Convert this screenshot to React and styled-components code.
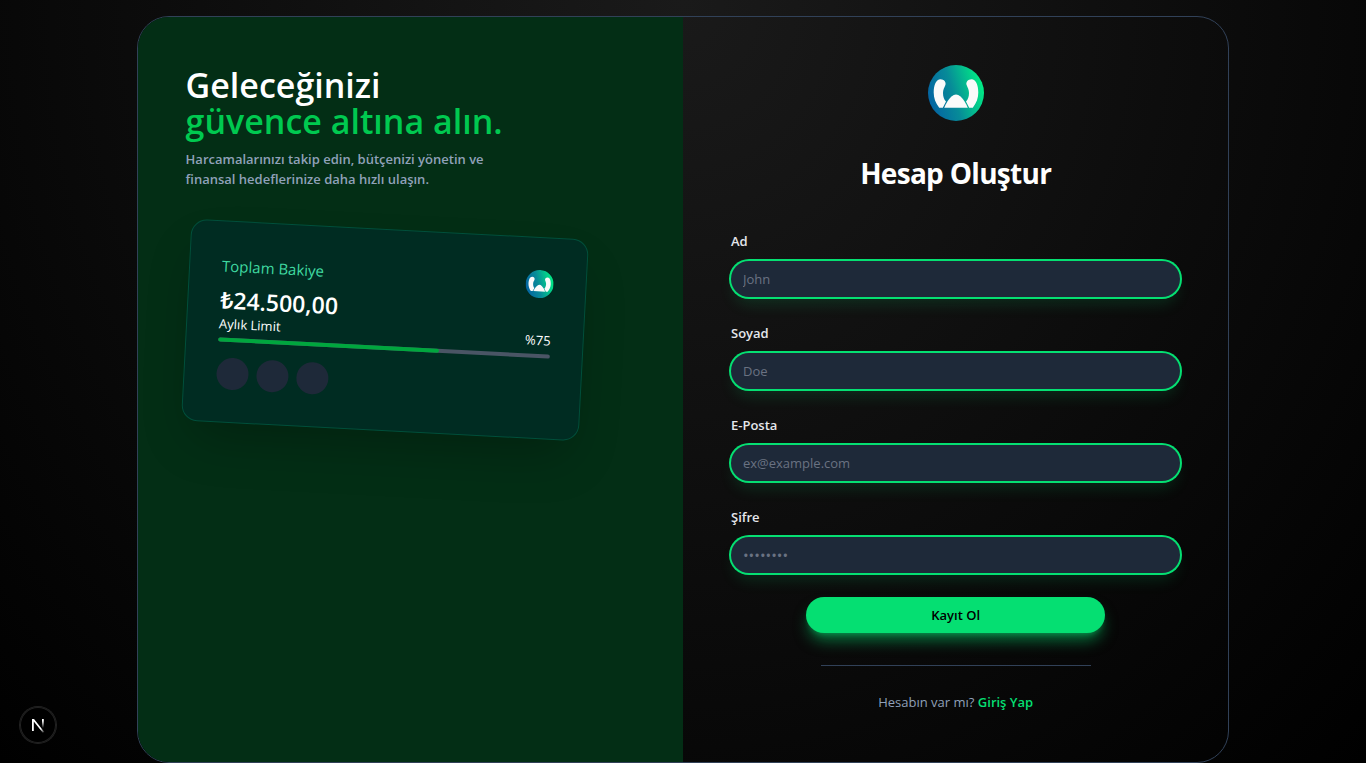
import React, { useId } from "react";
import styled, { createGlobalStyle } from "styled-components";

const GlobalStyle = createGlobalStyle`
  *, *::before, *::after { box-sizing: border-box; }
  body {
    margin: 0;
    background: #000;
    color: #fff;
    font-family: "Segoe UI", "Open Sans", "Noto Sans", sans-serif;
    font-size: 13px;
    line-height: 20px;
  }
  h1, h2, p { margin: 0; }
`;

const Page = styled.main`
  min-height: 100vh;
  padding-top: 16px;
  display: flex;
  justify-content: center;
  background: radial-gradient(ellipse at top, #1a1a1a, #000);
`;

const Shell = styled.div`
  width: 80%;
  display: grid;
  grid-template-columns: 1fr 1fr;
  border: 1px solid #314158;
  border-radius: 32px;
  overflow: hidden;
`;

const Intro = styled.section`
  padding: 48px;
  background: #032e15;
`;

const Headline = styled.h1`
  padding-top: 2px;
  font-size: 34px;
  line-height: 36px;
  font-weight: 600;
`;

const Accent = styled.span`
  display: block;
  color: #00c950;
`;

const Lead = styled.p`
  max-width: 320px;
  margin-top: 10px;
  font-weight: 600;
  color: #90a1b9;
`;

const BalanceCard = styled.article`
  max-width: 398px;
  margin-top: 40px;
  padding: 32px;
  border: 1px solid #004f3b;
  border-radius: 16px;
  background: #002c22;
  box-shadow: 0 25px 50px -12px rgba(0, 0, 0, 0.25);
  transform: rotate(3deg);
`;

const CardHead = styled.div`
  display: flex;
  justify-content: space-between;
  align-items: flex-start;
`;

const CardLabel = styled.p`
  font-size: 15px;
  line-height: 24px;
  color: #3fd9a0;
`;

const Amount = styled.p`
  margin-top: 8px;
  font-size: 23px;
  line-height: 28px;
  font-weight: 600;
`;

const LimitRow = styled.div`
  display: flex;
  justify-content: space-between;
`;

const Track = styled.div`
  height: 4px;
  margin-top: 4px;
  border-radius: 4px;
  background: #4a5565;
`;

const Fill = styled.div`
  height: 100%;
  border-radius: 4px;
  background: #00a63e;
`;

const Dots = styled.div`
  display: flex;
  gap: 8px;
  margin-top: 16px;
`;

const Dot = styled.span`
  width: 32px;
  height: 32px;
  border-radius: 50%;
  background: #1e2939;
`;

const FormPanel = styled.section`
  padding: 48px;
  display: flex;
  flex-direction: column;
  align-items: center;
`;

const Title = styled.h2`
  margin-top: 34px;
  font-size: 28px;
  line-height: 36px;
  font-weight: 700;
  letter-spacing: -0.025em;
`;

const Form = styled.form`
  width: 100%;
  margin-top: 40px;
  display: flex;
  flex-direction: column;
  align-items: center;
`;

const Field = styled.div`
  width: 100%;
  margin-bottom: 26px;
  display: flex;
  flex-direction: column;
  gap: 10px;
  &:last-of-type { margin-bottom: 24px; }
`;

const Label = styled.label`
  font-weight: 600;
  color: #e5e7eb;
`;

const Input = styled.input`
  width: 100%;
  height: 36px;
  padding: 0 12px;
  border: 0;
  border-radius: 18px;
  outline: none;
  background: #1e2939;
  color: #fff;
  font: inherit;
  font-size: ${(p) => (p.type === "password" ? "15px" : "13px")};
  box-shadow: 0 0 0 2px #05df72, 0 10px 15px -3px rgba(5, 223, 114, 0.15);
  &::placeholder { color: #6a7282; opacity: 1; }
`;

const Submit = styled.button`
  width: 66.6%;
  height: 36px;
  border: 0;
  border-radius: 18px;
  background: #05df72;
  color: #000;
  font: inherit;
  font-weight: 600;
  box-shadow: 0 10px 15px -3px rgba(5, 223, 114, 0.5), 0 4px 6px -4px rgba(5, 223, 114, 0.5);
  cursor: pointer;
`;

const Divider = styled.hr`
  width: 60%;
  margin: 32px 0 26px;
  border: 0;
  border-top: 1px solid #314158;
`;

const Hint = styled.p`
  color: #90a1b9;
`;

const Link = styled.a`
  color: #05df72;
  font-weight: 600;
  text-decoration: none;
`;

const DevBadge = styled.button`
  position: fixed;
  left: 20px;
  bottom: 20px;
  width: 36px;
  height: 36px;
  padding: 0;
  display: grid;
  place-items: center;
  border: 0;
  border-radius: 50%;
  background: #000;
  box-shadow: 0 0 0 1px #222, inset 0 0 0 1px #222;
`;

function Logo({ size }) {
  const id = useId();
  return (
    <svg width={size} height={size} viewBox="0 0 56 56" role="img" aria-label="Logo">
      <defs>
        <linearGradient id={id} x1="0" y1="0.65" x2="1" y2="0.35">
          <stop offset="0" stopColor="#0462a3" />
          <stop offset="0.45" stopColor="#078b98" />
          <stop offset="1" stopColor="#00f084" />
        </linearGradient>
      </defs>
      <circle cx="28" cy="28" r="28" fill={`url(#${id})`} />
      <g fill="#fafafa">
        <path d="M12.500 14.200C16 14.200 18.400 17 17.400 20C16.300 23 15 24.500 15 28C15 32 16.200 34.400 18 36.600L14.800 42.700H11.200C7.500 38 5.700 33 5.700 27.500C5.700 20 8.200 14.200 12.500 14.200Z" />
        <path d="M43.500 14.200C40 14.200 37.600 17 38.600 20C39.700 23 41 24.500 41 28C41 32 39.800 34.400 38 36.600L41.200 42.700H44.800C48.500 38 50.300 33 50.300 27.500C50.300 20 47.800 14.200 43.500 14.200Z" />
        <path d="M16.200 42.700C18 38 20.500 34.500 23.500 31.500C26.500 28.700 29.500 28.700 32.500 31.500C35.500 34.500 38 38 39.800 42.700Z" />
      </g>
    </svg>
  );
}

function NextMark() {
  const a = useId();
  const b = useId();
  return (
    <svg width="14" height="16" viewBox="0 0 14 16" fill="none" aria-hidden="true">
      <defs>
        <linearGradient id={a} x1="7" y1="8" x2="13" y2="15" gradientUnits="userSpaceOnUse">
          <stop offset="0.5" stopColor="#fff" />
          <stop offset="1" stopColor="#fff" stopOpacity="0.2" />
        </linearGradient>
        <linearGradient id={b} x1="12" y1="2" x2="12" y2="11" gradientUnits="userSpaceOnUse">
          <stop offset="0.2" stopColor="#fff" />
          <stop offset="1" stopColor="#fff" stopOpacity="0" />
        </linearGradient>
      </defs>
      <path d="M1 2H3L13.300 15L11.800 15.800L2.800 4.600V14H1Z" fill={`url(#${a})`} />
      <path d="M11 2H12.800V11H11Z" fill={`url(#${b})`} />
    </svg>
  );
}

const fields = [
  { id: "ad", label: "Ad", type: "text", placeholder: "John" },
  { id: "soyad", label: "Soyad", type: "text", placeholder: "Doe" },
  { id: "eposta", label: "E-Posta", type: "email", placeholder: "ex@example.com" },
  { id: "sifre", label: "Şifre", type: "password", placeholder: "••••••••" },
];

const balance = { amount: "₺24.500,00", limitPercent: 75, spent: 2, budget: 3 };

export default function App() {
  return (
    <>
      <GlobalStyle />
      <Page>
        <Shell>
          <Intro>
            <Headline>
              Geleceğinizi <Accent>güvence altına alın.</Accent>
            </Headline>
            <Lead>
              Harcamalarınızı takip edin, bütçenizi yönetin ve finansal hedeflerinize daha hızlı ulaşın.
            </Lead>
            <BalanceCard>
              <CardHead>
                <div>
                  <CardLabel>Toplam Bakiye</CardLabel>
                  <Amount>{balance.amount}</Amount>
                </div>
                <Logo size={28} />
              </CardHead>
              <LimitRow>
                <span>Aylık Limit</span>
                <span>%{balance.limitPercent}</span>
              </LimitRow>
              <Track>
                <Fill style={{ width: `${(balance.spent / balance.budget) * 100}%` }} />
              </Track>
              <Dots>
                <Dot />
                <Dot />
                <Dot />
              </Dots>
            </BalanceCard>
          </Intro>
          <FormPanel>
            <Logo size={56} />
            <Title>Hesap Oluştur</Title>
            <Form onSubmit={(e) => e.preventDefault()}>
              {fields.map((f) => (
                <Field key={f.id}>
                  <Label htmlFor={f.id}>{f.label}</Label>
                  <Input id={f.id} type={f.type} placeholder={f.placeholder} />
                </Field>
              ))}
              <Submit type="submit">Kayıt Ol</Submit>
            </Form>
            <Divider />
            <Hint>
              Hesabın var mı? <Link href="#giris">Giriş Yap</Link>
            </Hint>
          </FormPanel>
        </Shell>
      </Page>
      <DevBadge type="button" aria-label="Next.js">
        <NextMark />
      </DevBadge>
    </>
  );
}
